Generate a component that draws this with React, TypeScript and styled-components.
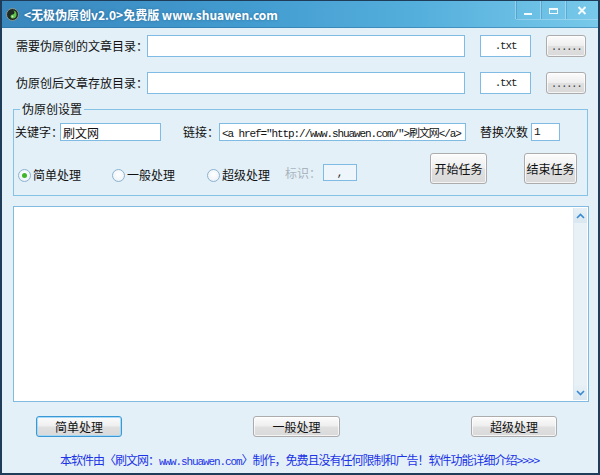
import React from "react";
import styled, { createGlobalStyle } from "styled-components";

const GlobalStyle = createGlobalStyle`
  html, body {
    margin: 0;
    padding: 0;
  }
  body {
    font-family: "Noto Sans CJK SC", "Noto Sans", sans-serif;
  }
  * {
    box-sizing: border-box;
  }
`;

const Window = styled.div`
  width: 600px;
  height: 475px;
  display: flex;
  flex-direction: column;
  background: #e3f0f8;
  border-style: solid;
  border-color: #1f3c59;
  border-width: 1px 2px 2px 2px;
  font-family: "Noto Sans CJK SC", "Noto Sans", sans-serif;
  font-size: 12px;
  line-height: 16px;
  color: #111;
  overflow: hidden;
`;

const TitleBar = styled.div`
  height: 27px;
  flex: none;
  display: flex;
  align-items: center;
  padding-left: 4px;
  background: linear-gradient(90deg, #3987bd 0%, #429bcf 40%, #55afdc 70%, #78c9ea 100%);
  box-shadow: inset 0 -1px 0 rgba(40, 110, 160, 0.5);
`;

const AppIcon = styled.svg`
  width: 13px;
  height: 13px;
  flex: none;
`;

const Title = styled.span`
  margin-left: 5px;
  color: #fff;
  font-weight: bold;
  font-size: 12px;
  white-space: nowrap;
  text-shadow: 0 0 3px rgba(20, 60, 100, 0.45);
`;

const Controls = styled.div`
  margin-left: auto;
  align-self: flex-start;
  display: flex;
  height: 19px;
  border-bottom: 1px solid rgba(255, 255, 255, 0.25);
  border-bottom-left-radius: 3px;
`;

const ControlButton = styled.div<{ $w: number }>`
  width: ${(p) => p.$w}px;
  height: 100%;
  display: flex;
  align-items: center;
  justify-content: center;
  border-left: 1px solid rgba(255, 255, 255, 0.3);
  box-shadow: inset 1px 0 0 rgba(30, 90, 140, 0.25);
`;

const Body = styled.div`
  flex: 1;
  display: flex;
  flex-direction: column;
  padding: 7px 0 0 11px;
`;

const PathRow = styled.div<{ $gap?: number }>`
  display: flex;
  align-items: center;
  height: 22px;
  padding-left: 3px;
  margin-bottom: ${(p) => p.$gap ?? 0}px;
`;

const Label = styled.span<{ $w: number }>`
  width: ${(p) => p.$w}px;
  flex: none;
  white-space: nowrap;
  font-size: 12px;
`;

const TextField = styled.input<{ $w: number; $h: number; $ml?: number; $mono?: boolean }>`
  width: ${(p) => p.$w}px;
  height: ${(p) => p.$h}px;
  margin: 0 0 0 ${(p) => p.$ml ?? 0}px;
  flex: none;
  padding: 0 2px;
  border: 1px solid #80bbe3;
  background: #fff;
  outline: none;
  color: #111;
  font-family: ${(p) => (p.$mono ? '"Liberation Mono", "Noto Sans CJK SC", monospace' : '"Noto Sans CJK SC", sans-serif')};
  font-size: ${(p) => (p.$mono ? "11px" : "12px")};
  letter-spacing: ${(p) => (p.$mono ? "-1.1px" : "0")};
`;

const ExtBox = styled.div<{ $ml: number; $w: number; $h: number; $muted?: boolean }>`
  width: ${(p) => p.$w}px;
  height: ${(p) => p.$h}px;
  margin-left: ${(p) => p.$ml}px;
  flex: none;
  display: flex;
  align-items: center;
  justify-content: center;
  border: 1px solid #80bbe3;
  background: ${(p) => (p.$muted ? "#eef6fb" : "#fff")};
  font-family: "Liberation Mono", monospace;
  font-size: 11px;
  letter-spacing: -1.2px;
  color: #222;
`;

const Button = styled.button<{ $w: number; $h: number; $ml?: number; $focus?: boolean }>`
  width: ${(p) => p.$w}px;
  height: ${(p) => p.$h}px;
  margin: 0 0 0 ${(p) => p.$ml ?? 0}px;
  flex: none;
  padding: 0;
  border: 1px solid ${(p) => (p.$focus ? "#3b98d6" : "#acacac")};
  border-radius: 3px;
  background: linear-gradient(#fcfcfc 0%, #eeeeee 48%, #e0e0e0 52%, #d9d9d9 100%);
  box-shadow: inset 0 0 0 1px ${(p) => (p.$focus ? "rgba(160, 215, 245, 0.9)" : "rgba(255, 255, 255, 0.7)")};
  font-family: "Noto Sans CJK SC", sans-serif;
  font-size: 12px;
  line-height: 16px;
  white-space: nowrap;
  color: #111;
`;

const Dots = styled.span`
  font-family: "Liberation Mono", monospace;
  font-size: 11px;
  letter-spacing: -1.5px;
  color: #444;
`;

const Group = styled.div`
  position: relative;
  width: 575px;
  height: 87px;
  margin-top: 15px;
  border: 1px solid #86c1e6;
  padding: 13px 0 0 1px;
  display: flex;
  flex-direction: column;
`;

const Legend = styled.span`
  position: absolute;
  top: -9px;
  left: 6px;
  padding: 0 2px;
  background: #e3f0f8;
  font-size: 12px;
  line-height: 16px;
`;

const GroupRow = styled.div<{ $mt?: number; $h: number }>`
  display: flex;
  align-items: flex-start;
  height: ${(p) => p.$h}px;
  margin-top: ${(p) => p.$mt ?? 0}px;
`;

const RowLabel = styled.span<{ $w: number; $ml?: number }>`
  width: ${(p) => p.$w}px;
  margin-left: ${(p) => p.$ml ?? 0}px;
  flex: none;
  height: 18px;
  line-height: 18px;
  white-space: nowrap;
`;

const Option = styled.label<{ $w: number; $ml?: number }>`
  width: ${(p) => p.$w}px;
  margin: 14px 0 0 ${(p) => p.$ml ?? 0}px;
  flex: none;
  display: flex;
  align-items: center;
  gap: 2px;
  height: 16px;
  white-space: nowrap;
`;

const RadioDot = styled.span<{ $on?: boolean }>`
  width: 13px;
  height: 13px;
  flex: none;
  border-radius: 50%;
  border: 1px solid #8cb2cf;
  background: radial-gradient(circle at 50% 40%, #ffffff 0%, #eef4f8 70%, #d8e4ec 100%);
  display: flex;
  align-items: center;
  justify-content: center;
  &::after {
    content: "";
    width: 5px;
    height: 5px;
    border-radius: 50%;
    background: ${(p) => (p.$on ? "#3fb52c" : "transparent")};
  }
`;

const MarkLabel = styled.span`
  width: 38px;
  margin-top: 12px;
  flex: none;
  color: #a9b4bc;
  white-space: nowrap;
`;

const MarkBox = styled(ExtBox)`
  margin-top: 11px;
  letter-spacing: 0;
`;

const LogBox = styled.div`
  width: 576px;
  height: 196px;
  margin-top: 10px;
  border: 1px solid #82bbe2;
  padding: 1px;
  display: flex;
  background: #fff;
`;

const LogArea = styled.textarea`
  flex: 1;
  border: none;
  outline: none;
  resize: none;
  overflow: hidden;
  background: #fff;
  font-family: "Noto Sans CJK SC", sans-serif;
  font-size: 12px;
`;

const ScrollBar = styled.div`
  width: 14px;
  flex: none;
  display: flex;
  flex-direction: column;
  background: #e8f1f6;
  border-left: 1px solid #dbe8f0;
`;

const ScrollArrow = styled.div`
  height: 15px;
  display: flex;
  align-items: center;
  justify-content: center;
  background: linear-gradient(#e6f0f6, #d9e7f0);
`;

const ScrollTrack = styled.div`
  flex: 1;
`;

const ActionRow = styled.div`
  display: flex;
  margin-top: 14px;
  padding-left: 23px;
`;

const Footer = styled.p`
  margin: 15px 0 0 47px;
  font-size: 12px;
  line-height: 16px;
  letter-spacing: -1px;
  color: #1c34e6;
  white-space: nowrap;
`;

const Mono = styled.span`
  font-family: "Liberation Mono", monospace;
  font-size: 11px;
  letter-spacing: -1.1px;
`;

function Chevron({ up }: { up?: boolean }) {
  return (
    <svg width="9" height="6" viewBox="0 0 9 6">
      <path
        d={up ? "M1 5 L4.5 1.5 L8 5" : "M1 1 L4.5 4.5 L8 1"}
        fill="none"
        stroke="#3a8ad2"
        strokeWidth="1.6"
      />
    </svg>
  );
}

export default function App() {
  return (
    <>
      <GlobalStyle />
      <Window>
        <TitleBar>
          <AppIcon viewBox="0 0 13 13">
            <circle cx="6.5" cy="6.5" r="6" fill="#1f2b24" stroke="#8c9a92" strokeWidth="1" />
            <path d="M6.5 2.5 A4 4 0 0 1 6.5 10.5 A2 2 0 0 1 6.5 6.5 A2 2 0 0 0 6.5 2.5 Z" fill="#5fc24a" />
            <circle cx="6.5" cy="4.5" r="0.9" fill="#1f2b24" />
            <circle cx="6.5" cy="8.5" r="0.9" fill="#cfe9c4" />
          </AppIcon>
          <Title>&lt;无极伪原创v2.0&gt;免费版 www.shuawen.com</Title>
          <Controls>
            <ControlButton $w={25}>
              <svg width="10" height="14" viewBox="0 0 10 14">
                <rect x="1" y="10" width="8" height="2" fill="#f4fbff" />
              </svg>
            </ControlButton>
            <ControlButton $w={25}>
              <svg width="11" height="14" viewBox="0 0 11 14">
                <rect x="1.5" y="5.5" width="8" height="5" fill="none" stroke="#f4fbff" strokeWidth="1" />
                <rect x="1" y="5" width="9" height="2" fill="#f4fbff" />
              </svg>
            </ControlButton>
            <ControlButton $w={33}>
              <svg width="10" height="14" viewBox="0 0 10 14">
                <path d="M1.5 4 L8.5 11 M8.5 4 L1.5 11" stroke="#f4fbff" strokeWidth="2" />
              </svg>
            </ControlButton>
          </Controls>
        </TitleBar>

        <Body>
          <PathRow $gap={15}>
            <Label $w={131}>需要伪原创的文章目录：</Label>
            <TextField $w={318} $h={22} defaultValue="" />
            <ExtBox $ml={15} $w={51} $h={22}>.txt</ExtBox>
            <Button $ml={15} $w={40} $h={22}>
              <Dots>......</Dots>
            </Button>
          </PathRow>
          <PathRow>
            <Label $w={131}>伪原创后文章存放目录：</Label>
            <TextField $w={318} $h={22} defaultValue="" />
            <ExtBox $ml={15} $w={51} $h={22}>.txt</ExtBox>
            <Button $ml={15} $w={40} $h={22}>
              <Dots>......</Dots>
            </Button>
          </PathRow>

          <Group>
            <Legend>伪原创设置</Legend>
            <GroupRow $h={18}>
              <RowLabel $w={45}>关键字：</RowLabel>
              <TextField $w={101} $h={18} defaultValue="刷文网" />
              <RowLabel $w={36} $ml={22}>链接：</RowLabel>
              <TextField
                $w={247}
                $h={18}
                $mono
                defaultValue={'<a href="http://www.shuawen.com/">刷文网</a>'}
              />
              <RowLabel $w={51} $ml={14}>替换次数</RowLabel>
              <TextField $w={29} $h={18} $mono defaultValue="1" />
            </GroupRow>
            <GroupRow $h={31} $mt={12}>
              <Option $w={94} $ml={3}>
                <RadioDot $on />
                简单处理
              </Option>
              <Option $w={95}>
                <RadioDot />
                一般处理
              </Option>
              <Option $w={78}>
                <RadioDot />
                超级处理
              </Option>
              <MarkLabel>标识：</MarkLabel>
              <MarkBox $ml={0} $w={34} $h={17} $muted>,</MarkBox>
              <Button $ml={73} $w={57} $h={31}>
                开始任务
              </Button>
              <Button $ml={37} $w={53} $h={31}>
                结束任务
              </Button>
            </GroupRow>
          </Group>

          <LogBox>
            <LogArea defaultValue="" />
            <ScrollBar>
              <ScrollArrow>
                <Chevron up />
              </ScrollArrow>
              <ScrollTrack />
              <ScrollArrow>
                <Chevron />
              </ScrollArrow>
            </ScrollBar>
          </LogBox>

          <ActionRow>
            <Button $w={86} $h={21} $focus>
              简单处理
            </Button>
            <Button $w={87} $h={21} $ml={131}>
              一般处理
            </Button>
            <Button $w={86} $h={21} $ml={131}>
              超级处理
            </Button>
          </ActionRow>

          <Footer>
            本软件由〈刷文网：<Mono>www.shuawen.com</Mono>〉制作，免费且没有任何限制和广告！软件功能详细介绍&gt;&gt;&gt;&gt;
          </Footer>
        </Body>
      </Window>
    </>
  );
}
